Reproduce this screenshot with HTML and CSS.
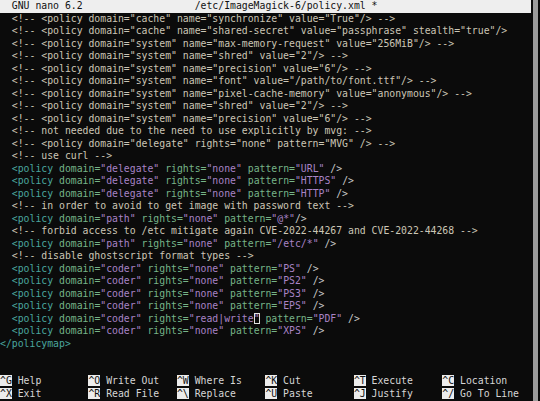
FILE: index.html
```html
<!DOCTYPE html>
<html lang="en">
<head>
<meta charset="utf-8"/>
<title>GNU nano 6.2 - policy.xml</title>
<link rel="stylesheet" href="styles.css">
</head>
<body>
  <div class="screen">
    <div class="term">
      <div class="titlebar">  GNU nano 6.2                   /etc/ImageMagick-6/policy.xml *</div>
      <div class="buffer">
        <div class="line cm">  &lt;!-- &lt;policy domain="cache" name="synchronize" value="True"/&gt; --&gt;</div>
        <div class="line cm">  &lt;!-- &lt;policy domain="cache" name="shared-secret" value="passphrase" stealth="true"/&gt;</div>
        <div class="line cm">  &lt;!-- &lt;policy domain="system" name="max-memory-request" value="256MiB"/&gt; --&gt;</div>
        <div class="line cm">  &lt;!-- &lt;policy domain="system" name="shred" value="2"/&gt; --&gt;</div>
        <div class="line cm">  &lt;!-- &lt;policy domain="system" name="precision" value="6"/&gt; --&gt;</div>
        <div class="line cm">  &lt;!-- &lt;policy domain="system" name="font" value="/path/to/font.ttf"/&gt; --&gt;</div>
        <div class="line cm">  &lt;!-- &lt;policy domain="system" name="pixel-cache-memory" value="anonymous"/&gt; --&gt;</div>
        <div class="line cm">  &lt;!-- &lt;policy domain="system" name="shred" value="2"/&gt; --&gt;</div>
        <div class="line cm">  &lt;!-- &lt;policy domain="system" name="precision" value="6"/&gt; --&gt;</div>
        <div class="line cm">  &lt;!-- not needed due to the need to use explicitly by mvg: --&gt;</div>
        <div class="line cm">  &lt;!-- &lt;policy domain="delegate" rights="none" pattern="MVG" /&gt; --&gt;</div>
        <div class="line cm">  &lt;!-- use curl --&gt;</div>
        <div class="line">  <span class="tg">&lt;policy</span><span class="at"> domain=</span><span class="st">"delegate"</span><span class="at"> rights=</span><span class="st">"none"</span><span class="at"> pattern=</span><span class="st">"URL"</span><span class="cl"> /&gt;</span></div>
        <div class="line">  <span class="tg">&lt;policy</span><span class="at"> domain=</span><span class="st">"delegate"</span><span class="at"> rights=</span><span class="st">"none"</span><span class="at"> pattern=</span><span class="st">"HTTPS"</span><span class="cl"> /&gt;</span></div>
        <div class="line">  <span class="tg">&lt;policy</span><span class="at"> domain=</span><span class="st">"delegate"</span><span class="at"> rights=</span><span class="st">"none"</span><span class="at"> pattern=</span><span class="st">"HTTP"</span><span class="cl"> /&gt;</span></div>
        <div class="line cm">  &lt;!-- in order to avoid to get image with password text --&gt;</div>
        <div class="line">  <span class="tg">&lt;policy</span><span class="at"> domain=</span><span class="st">"path"</span><span class="at"> rights=</span><span class="st">"none"</span><span class="at"> pattern=</span><span class="st">"@*"</span><span class="cl">/&gt;</span></div>
        <div class="line cm">  &lt;!-- forbid access to /etc mitigate again CVE-2022-44267 and CVE-2022-44268 --&gt;</div>
        <div class="line">  <span class="tg">&lt;policy</span><span class="at"> domain=</span><span class="st">"path"</span><span class="at"> rights=</span><span class="st">"none"</span><span class="at"> pattern=</span><span class="st">"/etc/*"</span><span class="cl"> /&gt;</span></div>
        <div class="line cm">  &lt;!-- disable ghostscript format types --&gt;</div>
        <div class="line">  <span class="tg">&lt;policy</span><span class="at"> domain=</span><span class="st">"coder"</span><span class="at"> rights=</span><span class="st">"none"</span><span class="at"> pattern=</span><span class="st">"PS"</span><span class="cl"> /&gt;</span></div>
        <div class="line">  <span class="tg">&lt;policy</span><span class="at"> domain=</span><span class="st">"coder"</span><span class="at"> rights=</span><span class="st">"none"</span><span class="at"> pattern=</span><span class="st">"PS2"</span><span class="cl"> /&gt;</span></div>
        <div class="line">  <span class="tg">&lt;policy</span><span class="at"> domain=</span><span class="st">"coder"</span><span class="at"> rights=</span><span class="st">"none"</span><span class="at"> pattern=</span><span class="st">"PS3"</span><span class="cl"> /&gt;</span></div>
        <div class="line">  <span class="tg">&lt;policy</span><span class="at"> domain=</span><span class="st">"coder"</span><span class="at"> rights=</span><span class="st">"none"</span><span class="at"> pattern=</span><span class="st">"EPS"</span><span class="cl"> /&gt;</span></div>
        <div class="line">  <span class="tg">&lt;policy</span><span class="at"> domain=</span><span class="st">"coder"</span><span class="at"> rights=</span><span class="st">"read|write<span class="cursor">"</span></span><span class="at"> pattern=</span><span class="st">"PDF"</span><span class="cl"> /&gt;</span></div>
        <div class="line">  <span class="tg">&lt;policy</span><span class="at"> domain=</span><span class="st">"coder"</span><span class="at"> rights=</span><span class="st">"none"</span><span class="at"> pattern=</span><span class="st">"XPS"</span><span class="cl"> /&gt;</span></div>
        <div class="line"><span class="tg">&lt;/policymap&gt;</span></div>
        <div class="line"> </div>
      </div>
      <div class="statusbar"> </div>
      <div class="shortcuts">
        <div class="sc"><span class="key">^G</span> Help</div>
        <div class="sc"><span class="key">^O</span> Write Out</div>
        <div class="sc"><span class="key">^W</span> Where Is</div>
        <div class="sc"><span class="key">^K</span> Cut</div>
        <div class="sc"><span class="key">^T</span> Execute</div>
        <div class="sc"><span class="key">^C</span> Location</div>
        <div class="sc"><span class="key">^X</span> Exit</div>
        <div class="sc"><span class="key">^R</span> Read File</div>
        <div class="sc"><span class="key">^\</span> Replace</div>
        <div class="sc"><span class="key">^U</span> Paste</div>
        <div class="sc"><span class="key">^J</span> Justify</div>
        <div class="sc"><span class="key">^/</span> Go To Line</div>
      </div>
    </div>
    <div class="scrollbar"></div>
  </div>
</body>
</html>
```
FILE: styles.css
```css
body {
  margin: 0;
  background: #0b0b0b;
  overflow: hidden;
}
.screen {
  display: flex;
  height: 401px;
  width: 540px;
  background: #0b0b0b;
}
.term {
  width: 531px;
  font-family: 'DejaVu Sans Mono', monospace;
  font-size: 9.8px;
  line-height: 12.53px;
  color: #d2d2d2;
}
.titlebar, .line, .statusbar, .sc {
  white-space: pre;
  height: 12.53px;
  overflow: hidden;
}
.titlebar {
  background: #eeeeee;
  color: #111;
}
.cm { color: #cbc6b6; }
.tg { color: #4aa69e; }
.at { color: #76b488; }
.st { color: #a883c6; }
.cl { color: #c8c8c8; }
.cursor {
  outline: 1px solid #e0e0e0;
  outline-offset: -1px;
}
.shortcuts {
  display: grid;
  grid-template-columns: repeat(6, 15ch);
  grid-auto-rows: 12.53px;
}
.sc {
  color: #d6d6d6;
}
.key {
  background: #ececec;
  color: #111;
}
.scrollbar {
  margin-left: 2px;
  width: 5px;
  background: #9c9c9c;
}
```
